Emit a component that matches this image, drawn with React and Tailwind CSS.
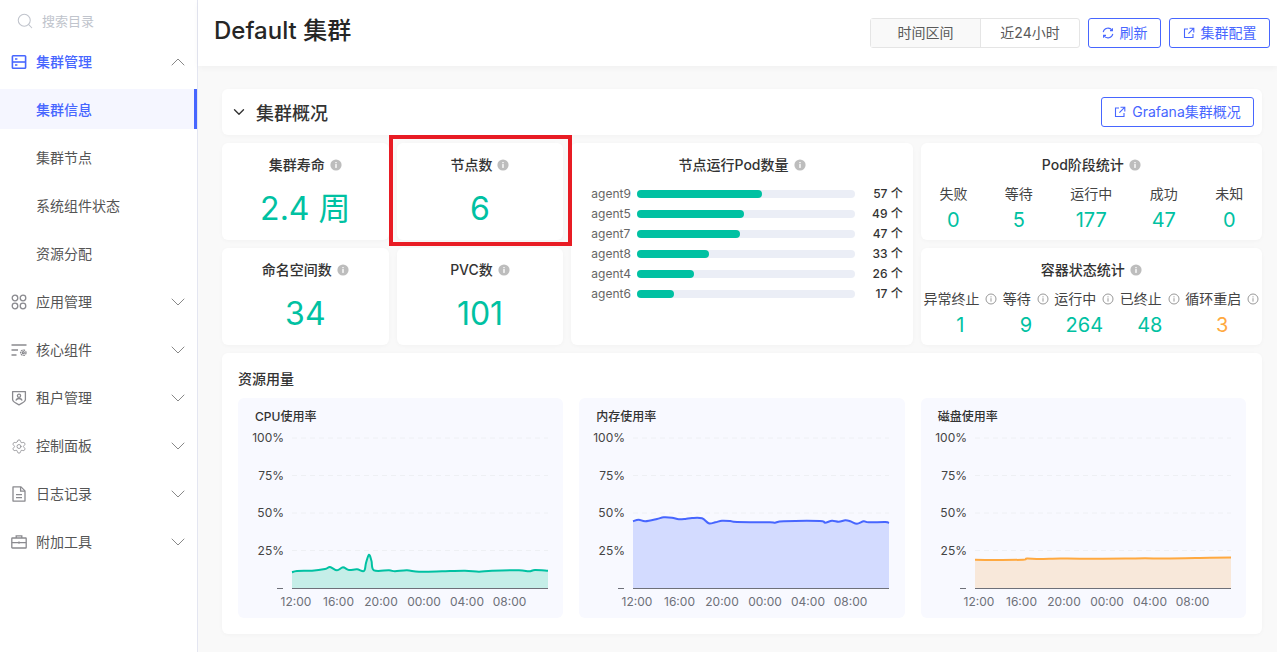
import { ChevronDown, ChevronUp, Search, Settings } from 'lucide-react'

const nodes = [
  { name: 'agent9', count: 57 },
  { name: 'agent5', count: 49 },
  { name: 'agent7', count: 47 },
  { name: 'agent8', count: 33 },
  { name: 'agent4', count: 26 },
  { name: 'agent6', count: 17 },
]

const podStats = [
  { label: '失败', value: 0 },
  { label: '等待', value: 5 },
  { label: '运行中', value: 177 },
  { label: '成功', value: 47 },
  { label: '未知', value: 0 },
]

const containerStats = [
  { label: '异常终止', value: 1 },
  { label: '等待', value: 9 },
  { label: '运行中', value: 264 },
  { label: '已终止', value: 48 },
  { label: '循环重启', value: 3, warn: true },
]

// points are px inside the 256x150 plot area
const cpuLine = [[0,134.3],[5,133],[20,132.7],[33,131],[38,129],[45,132.3],[51,129.3],[57,132],[65,131.3],[72,133],[74,125],[77,116.7],[79.5,123],[82,132.3],[97,132.3],[103,133.3],[115,132.3],[127,133.7],[150,133.3],[173,132.7],[187,133.7],[200,132.7],[227,132.3],[237,133.3],[243,132],[256,132.7]]
const memLine = [[0,83.3],[5.7,81.7],[12.3,83.3],[24,81],[30.7,79.3],[39,79.7],[45.7,81.3],[52.3,81],[59,80],[69,80.3],[75.7,85.3],[82.3,84.3],[89,82.7],[97.3,83],[104,84],[137,84.3],[142,84.7],[150.7,83.3],[187,83],[192,84.7],[199,82.7],[205.7,83.7],[212.3,82.3],[217.3,83.3],[224,85.7],[230.7,83.3],[235.7,84.3],[252.3,84],[256,85]]
const diskLine = [[0,121.7],[20,122],[48,121.7],[52,120.5],[65,121],[85,120.5],[105,120.7],[150,120.5],[170,120.3],[190,120.5],[225,120],[256,119.5]]

const smoothPath = (pts) => {
  let d = `M${pts[0][0]} ${pts[0][1]}`
  for (let i = 0; i < pts.length - 1; i++) {
    const p0 = pts[i - 1] || pts[i]
    const p1 = pts[i]
    const p2 = pts[i + 1]
    const p3 = pts[i + 2] || p2
    const c1x = p1[0] + (p2[0] - p0[0]) / 6
    const c1y = p1[1] + (p2[1] - p0[1]) / 6
    const c2x = p2[0] - (p3[0] - p1[0]) / 6
    const c2y = p2[1] - (p3[1] - p1[1]) / 6
    d += ` C${c1x.toFixed(1)} ${c1y.toFixed(1)} ${c2x.toFixed(1)} ${c2y.toFixed(1)} ${p2[0]} ${p2[1]}`
  }
  return d
}

function InfoFilled() {
  return (
    <svg width="12" height="12" viewBox="0 0 12 12" className="shrink-0">
      <circle cx="6" cy="6" r="5.6" fill="#bdbdbd" />
      <rect x="5.3" y="5" width="1.4" height="4" rx="0.4" fill="#fff" />
      <rect x="5.3" y="2.9" width="1.4" height="1.4" rx="0.4" fill="#fff" />
    </svg>
  )
}

function InfoOutline() {
  return (
    <svg width="12" height="12" viewBox="0 0 12 12" className="shrink-0">
      <circle cx="6" cy="6" r="5" fill="none" stroke="#999" strokeWidth="1" />
      <rect x="5.5" y="5.2" width="1" height="3.4" fill="#999" />
      <rect x="5.5" y="3.3" width="1" height="1.1" fill="#999" />
    </svg>
  )
}

function ExternalIcon() {
  return (
    <svg width="12" height="12" viewBox="0 0 12 12" fill="none" stroke="currentColor" strokeWidth="1.1" className="shrink-0">
      <path d="M5 2H1.5v8.5H10V7" />
      <path d="M6.5 1.2h4.3v4.3M10.6 1.4L5.4 6.6" />
    </svg>
  )
}

function RefreshIcon() {
  return (
    <svg width="12" height="12" viewBox="0 0 12 12" fill="none" stroke="currentColor" strokeWidth="1.1" className="shrink-0">
      <path d="M1.2 5.2A4.9 4.9 0 0 1 10 3.2" />
      <path d="M10.8 6.8A4.9 4.9 0 0 1 2 8.8" />
      <path d="M10.4 1.2v2.4H8" />
      <path d="M1.6 10.8V8.4H4" />
    </svg>
  )
}

const iconProps = { width: 16, height: 16, viewBox: '0 0 16 16', fill: 'none', stroke: 'currentColor', strokeWidth: 1.3 }

function ClusterIcon() {
  return (
    <svg {...iconProps} strokeWidth="1.6">
      <rect x="1.4" y="1.8" width="13.2" height="12.4" rx="0.8" />
      <path d="M1.4 8h13.2" />
      <path d="M4 5h2.4M4 11h2.4" />
    </svg>
  )
}

function AppsIcon() {
  return (
    <svg {...iconProps}>
      <circle cx="4" cy="4" r="2.8" />
      <circle cx="12" cy="4" r="2.8" />
      <circle cx="4" cy="12" r="2.8" />
      <circle cx="12" cy="12" r="2.8" />
    </svg>
  )
}

function CoreIcon() {
  return (
    <svg {...iconProps}>
      <path d="M0.5 3h15M0.5 8h6.5M0.5 13h5" />
      <circle cx="12.3" cy="10.7" r="1" />
      <circle cx="12.3" cy="10.7" r="2.7" strokeDasharray="1.7 0.8" />
    </svg>
  )
}

function TenantIcon() {
  return (
    <svg {...iconProps}>
      <path d="M1.6 1.6h12.8v8c0 2.2-3 3.7-6.4 5.2-3.4-1.5-6.4-3-6.4-5.2z" strokeLinejoin="round" />
      <circle cx="8" cy="5.8" r="1.6" />
      <path d="M4.8 10.4c.6-1.3 1.8-1.9 3.2-1.9s2.6.6 3.2 1.9" />
    </svg>
  )
}

function FileIcon() {
  return (
    <svg {...iconProps}>
      <path d="M2 0.9h8l4 4v10.2H2z" strokeLinejoin="round" />
      <path d="M9.6 1v4.2H14" />
      <path d="M5 8.6h6M5 11.6h6" />
    </svg>
  )
}

function ToolboxIcon() {
  return (
    <svg {...iconProps}>
      <rect x="0.8" y="4" width="14.4" height="10" rx="0.6" />
      <path d="M5.2 4V1.8h5.6V4M0.8 8.6h14.4M8 7.4v2.4" />
    </svg>
  )
}

const menu = [
  { label: '应用管理', icon: <AppsIcon /> },
  { label: '核心组件', icon: <CoreIcon /> },
  { label: '租户管理', icon: <TenantIcon /> },
  { label: '控制面板', icon: <Settings size={17} strokeWidth={1.2} /> },
  { label: '日志记录', icon: <FileIcon /> },
  { label: '附加工具', icon: <ToolboxIcon /> },
]

function Sidebar() {
  return (
    <aside className="w-[198px] shrink-0 border-r border-[#e4e6f1] bg-white text-sm">
      <div className="flex h-[38px] items-center gap-2 pl-4 pt-1 text-[13px] text-[#c0c4cc]">
        <Search size={18} strokeWidth={1.4} />
        <span>搜索目录</span>
      </div>
      <div className="flex h-12 items-center pl-[11px] pr-[7px] text-[#4766ff]">
        <ClusterIcon />
        <span className="ml-[9px] flex-1 font-medium">集群管理</span>
        <ChevronUp size={24} strokeWidth={1} className="text-[#888]" />
      </div>
      <div className="flex flex-col gap-2 pb-[5px] pt-[3px]">
        <div className="flex h-10 items-center border-r-[3px] border-[#4766ff] bg-[#f5f6ff] pl-9 pt-0.5 font-medium text-[#4766ff]">集群信息</div>
        {['集群节点', '系统组件状态', '资源分配'].map((label) => (
          <div key={label} className="flex h-10 items-center pl-9 pt-0.5 text-[#555]">{label}</div>
        ))}
      </div>
      {menu.map((item) => (
        <div key={item.label} className="flex h-12 items-center pl-[11px] pr-[7px] text-[#555]">
          <span className="flex w-4 justify-center text-[#8a8a8f]">{item.icon}</span>
          <span className="ml-[9px] flex-1">{item.label}</span>
          <ChevronDown size={24} strokeWidth={1} className="text-[#888]" />
        </div>
      ))}
    </aside>
  )
}

function Header() {
  return (
    <header className="flex h-[66px] shrink-0 items-center justify-between bg-white pl-4 pr-[7px] shadow-[0_2px_6px_rgba(0,0,0,0.04)]">
      <h1 className="-mt-1 text-2xl font-medium text-[#262626]">Default 集群</h1>
      <div className="-mt-px flex items-center gap-2 text-sm">
        <div className="flex h-[30px] rounded-[3px] border border-[#e5e5e5] text-[#595959]">
          <span className="flex w-[110px] items-center justify-center border-r border-[#e5e5e5] bg-[#f9f9f9]">时间区间</span>
          <span className="flex w-[98px] items-center justify-center">近24小时</span>
        </div>
        <button className="flex h-[30px] w-[73px] items-center justify-center gap-1.5 rounded-[3px] border border-[#4766ff] text-[#4766ff]">
          <RefreshIcon />刷新
        </button>
        <button className="flex h-[30px] w-[101px] items-center justify-center gap-1.5 rounded-[3px] border border-[#4766ff] text-[#4766ff]">
          <ExternalIcon />集群配置
        </button>
      </div>
    </header>
  )
}

function Card({ children, className = '' }) {
  return <div className={`rounded-md bg-white shadow-[0_1px_4px_rgba(0,0,0,0.03)] ${className}`}>{children}</div>
}

function StatCard({ title, value }) {
  return (
    <Card className="flex h-[97px] flex-col items-center pt-[13px]">
      <div className="flex h-[18px] items-center gap-[5px] text-sm font-medium text-[#333]">
        {title}
        <InfoFilled />
      </div>
      <div className="mt-[13px] text-[32px] leading-[44px] text-[#00c1a2]">{value}</div>
    </Card>
  )
}

function NodePods() {
  return (
    <Card className="flex h-[202px] flex-col pl-5 pr-[10px] pt-[13px]">
      <div className="flex h-[18px] items-center justify-center gap-[5px] pr-[10px] text-sm font-medium text-[#333]">
        节点运行Pod数量
        <InfoFilled />
      </div>
      <div className="mt-2.5 flex flex-col">
        {nodes.map((node) => (
          <div key={node.name} className="flex h-5 items-center">
            <span className="w-[38px] whitespace-nowrap text-right text-xs text-[#666]">{node.name}</span>
            <div className="ml-2 h-2 w-[218px] rounded-full bg-[#ebeef6]">
              <div className="h-2 rounded-full bg-[#00c1a2]" style={{ width: `${node.count}%` }} />
            </div>
            <span className="ml-auto whitespace-nowrap text-right text-xs font-medium text-[#333]">{node.count} 个</span>
          </div>
        ))}
      </div>
    </Card>
  )
}

function PodStats() {
  return (
    <Card className="h-[97px] pt-[13px]">
      <div className="flex h-[18px] items-center justify-center gap-[5px] text-sm font-medium text-[#333]">
        Pod阶段统计
        <InfoFilled />
      </div>
      <div className="mt-2 flex justify-around">
        {podStats.map((s) => (
          <div key={s.label} className="flex flex-col items-center">
            <span className="text-sm leading-6 text-[#444]">{s.label}</span>
            <span className="text-xl leading-7 text-[#00c1a2]">{s.value}</span>
          </div>
        ))}
      </div>
    </Card>
  )
}

function ContainerStats() {
  return (
    <Card className="h-[97px] pt-[13px]">
      <div className="flex h-[18px] items-center justify-center gap-[5px] text-sm font-medium text-[#333]">
        容器状态统计
        <InfoFilled />
      </div>
      <div className="mt-2 flex justify-around">
        {containerStats.map((s) => (
          <div key={s.label} className="flex flex-col items-center">
            <span className="flex items-center gap-1.5 text-sm leading-6 text-[#444]">{s.label}<InfoOutline /></span>
            <span className={`text-xl leading-7 ${s.warn ? 'text-[#ffa940]' : 'text-[#00c1a2]'}`}>{s.value}</span>
          </div>
        ))}
      </div>
    </Card>
  )
}

function UsageChart({ title, points, color, fill }) {
  const line = smoothPath(points)
  return (
    <div className="h-[220px] rounded-md bg-[#f8f9ff]">
      <div className="h-[30px] pl-[17px] pt-[9px] text-xs font-medium leading-5 text-[#333]">{title}</div>
      <svg width="325" height="190" className="block text-xs">
        {[
          ['100%', 10],
          ['75%', 47.5],
          ['50%', 85],
          ['25%', 122.5],
        ].map(([label, y]) => (
          <g key={label}>
            <text x="46" y={y + 4} textAnchor="end" fill="#444">{label}</text>
            <line x1="54" x2="310" y1={y} y2={y} stroke="#eef0f4" strokeDasharray="5 4" />
          </g>
        ))}
        <g transform="translate(54 10)">
          <path d={`${line} L256 150 L0 150 Z`} fill={fill} />
          <path d={line} fill="none" stroke={color} strokeWidth="2" />
        </g>
        <line x1="39" x2="45" y1="160.5" y2="160.5" stroke="#6e7079" />
        <line x1="54" x2="310" y1="160.5" y2="160.5" stroke="#6e7079" />
        {[
          ['12:00', 58],
          ['16:00', 100.5],
          ['20:00', 143],
          ['00:00', 186],
          ['04:00', 229],
          ['08:00', 271.5],
        ].map(([label, x]) => (
          <text key={label} x={x} y="178" textAnchor="middle" fill="#6e7079">{label}</text>
        ))}
      </svg>
    </div>
  )
}

export default function App() {
  return (
    <div className="flex h-[652px] w-full overflow-hidden bg-[#f9f9f9] font-['Inter','Noto_Sans_CJK_SC',sans-serif]">
      <Sidebar />
      <main className="flex min-w-0 flex-1 flex-col">
        <Header />
        <div className="flex flex-col gap-2 pl-6 pr-[15px] pt-[23px]">
          {/* 集群概况 */}
          <Card className="flex h-[46px] items-center pl-2 pr-2">
            <ChevronDown size={18} strokeWidth={1.8} className="text-[#333]" />
            <span className="ml-2 flex-1 pt-[3px] text-lg font-medium text-[#333]">集群概况</span>
            <button className="flex h-[30px] w-[153px] items-center justify-center gap-1.5 rounded-[3px] border border-[#4766ff] text-sm text-[#4766ff]">
              <ExternalIcon />Grafana集群概况
            </button>
          </Card>

          <div className="grid grid-cols-3 gap-2">
            <div className="grid grid-cols-2 gap-2">
              <StatCard title="集群寿命" value="2.4 周" />
              <div className="relative">
                <StatCard title="节点数" value="6" />
                <div className="pointer-events-none absolute -bottom-[6px] -left-2 -right-[9px] -top-2 border-4 border-[#e81c24]" />
              </div>
              <StatCard title="命名空间数" value="34" />
              <StatCard title="PVC数" value="101" />
            </div>
            <NodePods />
            <div className="flex flex-col gap-2">
              <PodStats />
              <ContainerStats />
            </div>
          </div>

          {/* 资源用量 */}
          <Card className="h-[281px] px-4">
            <div className="flex h-[45px] items-center pt-[7px] text-sm font-medium text-[#333]">资源用量</div>
            <div className="grid grid-cols-3 gap-4">
              <UsageChart title="CPU使用率" points={cpuLine} color="#00c1a2" fill="#c5eee8" />
              <UsageChart title="内存使用率" points={memLine} color="#4766ff" fill="#d3dbff" />
              <UsageChart title="磁盘使用率" points={diskLine} color="#ffa940" fill="#f8e8da" />
            </div>
          </Card>
        </div>
      </main>
    </div>
  )
}
